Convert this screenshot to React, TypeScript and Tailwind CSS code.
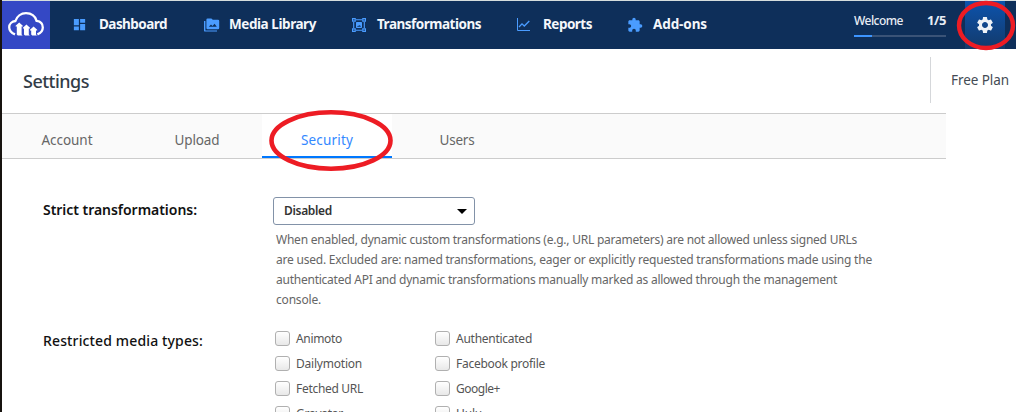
import { useLayoutEffect, useRef, useState } from "react";
import type { ReactNode } from "react";
import { MdDashboard, MdExtension, MdSettings } from "react-icons/md";

/** Single line of text, tracked so that it fills exactly `width` pixels. */
function Label({ text, width, className = "" }: { text: string; width: number; className?: string }) {
  const ref = useRef<HTMLSpanElement>(null);
  const [tracking, setTracking] = useState(0);
  useLayoutEffect(() => {
    const natural = ref.current?.getBoundingClientRect().width ?? width;
    setTracking((width - natural) / text.length);
  }, [text, width]);
  return (
    <span
      ref={ref}
      className={`inline-block shrink-0 whitespace-nowrap ${className}`}
      style={{ letterSpacing: `${tracking}px` }}
    >
      {text}
    </span>
  );
}

function CloudLogo() {
  return (
    <svg className="mb-[2px] h-6 w-9" viewBox="0 0 36 24" fill="none">
      <path
        d="M7 22.4C3.6 21 1.2 18.6 1.2 15.3C1.2 11.8 4 9.3 7.4 9C8.9 4.6 13 1.2 18 1.2C23.3 1.2 27.2 4.3 28.6 8.9C32.1 9.4 34.8 11.8 34.8 15.5C34.8 18.6 32.4 21.2 29.4 22.4"
        stroke="white"
        strokeWidth="2.3"
      />
      <path
        d="M11.2 10.4L14.8 13.8V14.6H13.6V22.4L14.6 23.6H9.8L8.8 22.4V14.6H7.6V13.8ZM18.4 12.4L22 15.8V16.6H20.8V22.4L21.8 23.6H17L16 22.4V16.6H14.9V15.8ZM25.6 14.4L29.2 17.8V18.6H28V22.4L29 23.6H24.2L23.2 22.4V18.6H22V17.8Z"
        fill="white"
      />
    </svg>
  );
}

function MediaIcon() {
  return (
    <svg className="h-[14px] w-4" viewBox="0 0 16 14">
      <path d="M0 3H1.4V12.4H13V13.6H1.2Q0 13.6 0 12.4Z" fill="#4a9cff" />
      <path
        fillRule="evenodd"
        d="M3.6 0.4H7.4L8.8 1.8H14Q15.2 1.8 15.2 3V10Q15.2 11.2 14 11.2H3.6Q2.4 11.2 2.4 10V1.6Q2.4 0.4 3.6 0.4ZM4.8 8.8H12.8L10.6 5.7L8.5 8L7 6.5Z"
        fill="#4a9cff"
      />
    </svg>
  );
}

function TransformIcon() {
  return (
    <svg className="h-[14px] w-[14px]" viewBox="0 0 14 14" fill="none" stroke="#4a9cff">
      <path d="M4 1.7H10M4 12.3H10M1.7 4V10M12.3 4V10" strokeWidth="1.1" />
      <path d="M.6.6H3.2V3.2H.6ZM10.8.6H13.4V3.2H10.8ZM.6 10.8H3.2V13.4H.6ZM10.8 10.8H13.4V13.4H10.8Z" strokeWidth="1.2" />
      <path fillRule="evenodd" d="M4.6 4H9.4L10 4.6V9.4L9.4 10H4.6L4 9.4V4.6ZM5 8.7H9L7.8 7L6.9 8L6.2 7.4Z" fill="#4a9cff" stroke="none" />
    </svg>
  );
}

function ChartIcon() {
  return (
    <svg className="h-[14px] w-[14px]" viewBox="0 0 14 14" fill="none" stroke="#4a9cff">
      <path d="M.5 0V12.5H13" strokeWidth="1" />
      <path d="M2 9L5 5.8L7.3 8L12.3 3" strokeWidth="1.3" />
    </svg>
  );
}

function NavItem({ icon, text, width, className }: { icon: ReactNode; text: string; width: number; className: string }) {
  return (
    <a className={`flex shrink-0 items-center ${className}`}>
      <span className="flex h-4 shrink-0 items-center">{icon}</span>
      <Label text={text} width={width} className="pb-px text-[13.5px] font-bold text-[#f4f7fb]" />
    </a>
  );
}

function Header() {
  return (
    <header className="flex h-12 items-center bg-[#0e2f5a]">
      <div className="flex h-12 w-12 shrink-0 items-center justify-center bg-[#3448c5]">
        <CloudLogo />
      </div>
      <nav className="flex flex-1 items-center">
        <NavItem icon={<MdDashboard className="mb-px h-[15px] w-[15px] text-[#4a9cff]" />} text="Dashboard" width={68} className="ml-[22px] w-[132px] gap-3" />
        <NavItem icon={<MediaIcon />} text="Media Library" width={87} className="w-[148px] gap-[9px]" />
        <NavItem icon={<TransformIcon />} text="Transformations" width={104} className="w-[165px] gap-[11px]" />
        <NavItem icon={<ChartIcon />} text="Reports" width={49} className="w-[110px] gap-3" />
        <NavItem icon={<MdExtension className="h-4 w-4 text-[#4a9cff]" />} text="Add-ons" width={54} className="gap-[10px]" />
      </nav>
      <div className="mr-[19px] w-[92px] shrink-0">
        <div className="flex h-5 items-center justify-between text-[#e8edf5]">
          <Label text="Welcome" width={49} className="text-xs font-medium" />
          <Label text="1/5" width={19} className="text-[13px] font-bold" />
        </div>
        <div className="mt-1 mb-[3px] h-[2px] bg-[#3a5377]">
          <div className="h-full w-[18px] bg-[#3d95ff]" />
        </div>
      </div>
      <button className="relative mr-[11px] flex h-12 w-10 shrink-0 items-center justify-center bg-linear-to-b from-[#0b53ad] to-[#123a6b]">
        <MdSettings className="h-5 w-5 text-[#eef2f7]" />
        <svg className="absolute -top-[1px] -left-[9px] h-[51px] w-[60px] max-w-none" viewBox="0 0 60 51" fill="none">
          <ellipse cx="30" cy="25.5" rx="27" ry="22.5" stroke="#ed1c24" strokeWidth="4.4" />
        </svg>
      </button>
    </header>
  );
}

const tabs = [
  { text: "Account", width: 51 },
  { text: "Upload", width: 45 },
  { text: "Security", width: 52 },
  { text: "Users", width: 35 },
];

function Tabs() {
  return (
    <div className="flex h-[46px] w-[944px] border-y border-[#cccccc] bg-[#fafafa]">
      {tabs.map((tab) =>
        tab.text === "Security" ? (
          <div key={tab.text} className="relative flex w-[130px] items-center justify-center border-b-2 border-[#0078ff] bg-white pt-[10px] text-[#3388ff]">
            <Label text={tab.text} width={tab.width} className="text-[13.5px] leading-8" />
            <svg className="absolute -top-[5px] left-[6px] h-[64px] w-[126px] max-w-none" viewBox="0 0 126 64" fill="none">
              <ellipse cx="63" cy="31.5" rx="59.5" ry="28.2" stroke="#ed1c24" strokeWidth="4.6" />
            </svg>
          </div>
        ) : (
          <div key={tab.text} className="flex w-[130px] items-center justify-center pt-2 text-[#666666]">
            <Label text={tab.text} width={tab.width} className="text-[13.5px] leading-8" />
          </div>
        ),
      )}
    </div>
  );
}

const helpLines = [
  { text: "When enabled, dynamic custom transformations (e.g., URL parameters) are not allowed unless signed URLs", width: 581 },
  { text: "are used. Excluded are: named transformations, eager or explicitly requested transformations made using the", width: 596 },
  { text: "authenticated API and dynamic transformations manually marked as allowed through the management", width: 561 },
  { text: "console.", width: 45 },
];

const mediaTypes = [
  { text: "Animoto", width: 46 },
  { text: "Authenticated", width: 76 },
  { text: "Dailymotion", width: 66 },
  { text: "Facebook profile", width: 89 },
  { text: "Fetched URL", width: 67 },
  { text: "Google+", width: 44 },
  { text: "Gravatar", width: 47 },
  { text: "Hulu", width: 26 },
];

export default function App() {
  return (
    <div className="flex h-[412px] w-[1016px] overflow-hidden bg-white font-['Noto_Sans','Open_Sans',sans-serif]">
      <div className="w-[2px] shrink-0 bg-[#17130f]" />
      <div className="w-[1014px] shrink-0">
        <div className="h-px bg-[#d5dddd]" />
        <Header />
        <div className="flex h-16 items-center justify-between">
          <h1 className="ml-[21px] flex text-lg text-[#333d47]">
            <Label text="Settings" width={66} className="font-medium" />
          </h1>
          <div className="mb-[2px] flex h-[46px] w-[86px] items-center border-l border-[#d5d7da] pl-5 text-[#444b54]">
            <Label text="Free Plan" width={58} className="text-[13.5px]" />
          </div>
        </div>
        <Tabs />
        <main className="pl-[41px]">
          <section className="mt-[38px] flex">
            <div className="flex h-[26px] w-[230px] items-center text-[#111111]">
              <Label text="Strict transformations:" width={154} className="pb-px text-[14px] font-semibold" />
            </div>
            <div>
              <div className="flex h-7 w-[202px] items-center justify-between rounded-[3px] border border-[#8292a8] pr-[7px] pl-[10px] text-[#333333]">
                <Label text="Disabled" width={48} className="text-xs font-semibold" />
                <svg className="h-[5px] w-[10px]" viewBox="0 0 10 5">
                  <path d="M0 0H10L5 5Z" fill="black" />
                </svg>
              </div>
              <div className="mt-[5px] ml-[3px] flex flex-col items-start text-xs leading-5 text-[#666666]">
                {helpLines.map((line) => (
                  <Label key={line.text} text={line.text} width={line.width} />
                ))}
              </div>
            </div>
          </section>
          <section className="mt-4 flex">
            <div className="flex h-[26px] w-[232px] items-center pt-[2px] text-[#111111]">
              <Label text="Restricted media types:" width={160} className="text-[14px] font-medium" />
            </div>
            <div className="grid grid-cols-[160px_160px] text-xs text-[#555555]">
              {mediaTypes.map((type) => (
                <label key={type.text} className="flex h-[25px] items-center gap-[6px]">
                  <span className="h-[15px] w-[15px] shrink-0 rounded-[3px] border border-[#b0b0b0] bg-linear-to-b from-white to-[#e8e8e8]" />
                  <Label text={type.text} width={type.width} />
                </label>
              ))}
            </div>
          </section>
        </main>
      </div>
    </div>
  );
}
